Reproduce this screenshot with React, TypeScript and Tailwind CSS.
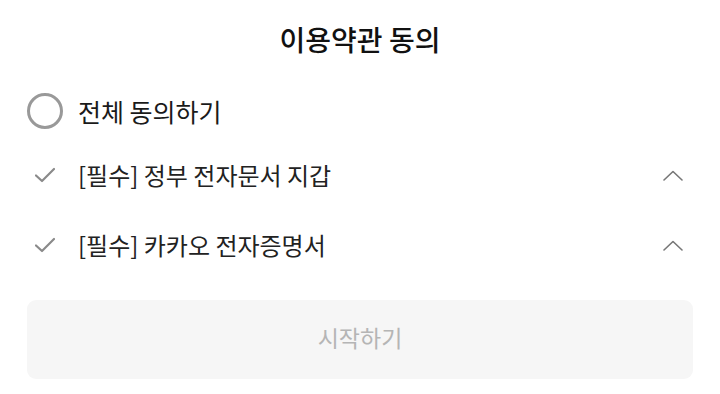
import React from "react";

const font = { fontFamily: '"Noto Sans CJK KR", "Noto Sans", sans-serif' };

function Check() {
  return (
    <svg width="20" height="16" viewBox="0 0 20 16" fill="none">
      <path d="M1 8.5 L7 14 L19 2" stroke="#8a8a8a" strokeWidth="2.2" strokeLinecap="round" strokeLinejoin="round" />
    </svg>
  );
}

function ChevronUp() {
  return (
    <svg width="20" height="11" viewBox="0 0 20 11" fill="none">
      <path d="M1 10 L10 1.5 L19 10" stroke="#777" strokeWidth="1.6" strokeLinecap="round" strokeLinejoin="round" />
    </svg>
  );
}

function Row({ label, className }: { label: string; className: string }) {
  return (
    <div className={`flex items-center ${className}`}>
      <div className="w-[51px] pl-[8px] flex items-center">
        <Check />
      </div>
      <span className="flex-1 text-[24px] text-[#222] leading-none">{label}</span>
      <div className="pr-[10px] flex items-center">
        <ChevronUp />
      </div>
    </div>
  );
}

export default function App() {
  return (
    <div className="w-[720px] h-[394px] bg-white px-[27px] flex flex-col" style={font}>
      <div className="h-[78px] flex items-center justify-center">
        <h1 className="text-[28px] font-medium text-[#111] leading-none">이용약관 동의</h1>
      </div>
      <div className="h-[66px] flex items-center">
        <div className="w-[36px] h-[36px] rounded-full border-[3px] border-[#999] mr-[15px]" />
        <span className="text-[25px] font-normal text-[#1a1a1a] leading-none">전체 동의하기</span>
      </div>
      <Row label="[필수] 정부 전자문서 지갑" className="h-[62px]" />
      <Row label="[필수] 카카오 전자증명서" className="h-[78px]" />
      <button className="mt-[16px] h-[79px] w-full rounded-[9px] bg-[#f6f6f6] flex items-center justify-center">
        <span className="text-[23px] text-[#b5b5b5] leading-none mb-[4px]">시작하기</span>
      </button>
    </div>
  );
}
